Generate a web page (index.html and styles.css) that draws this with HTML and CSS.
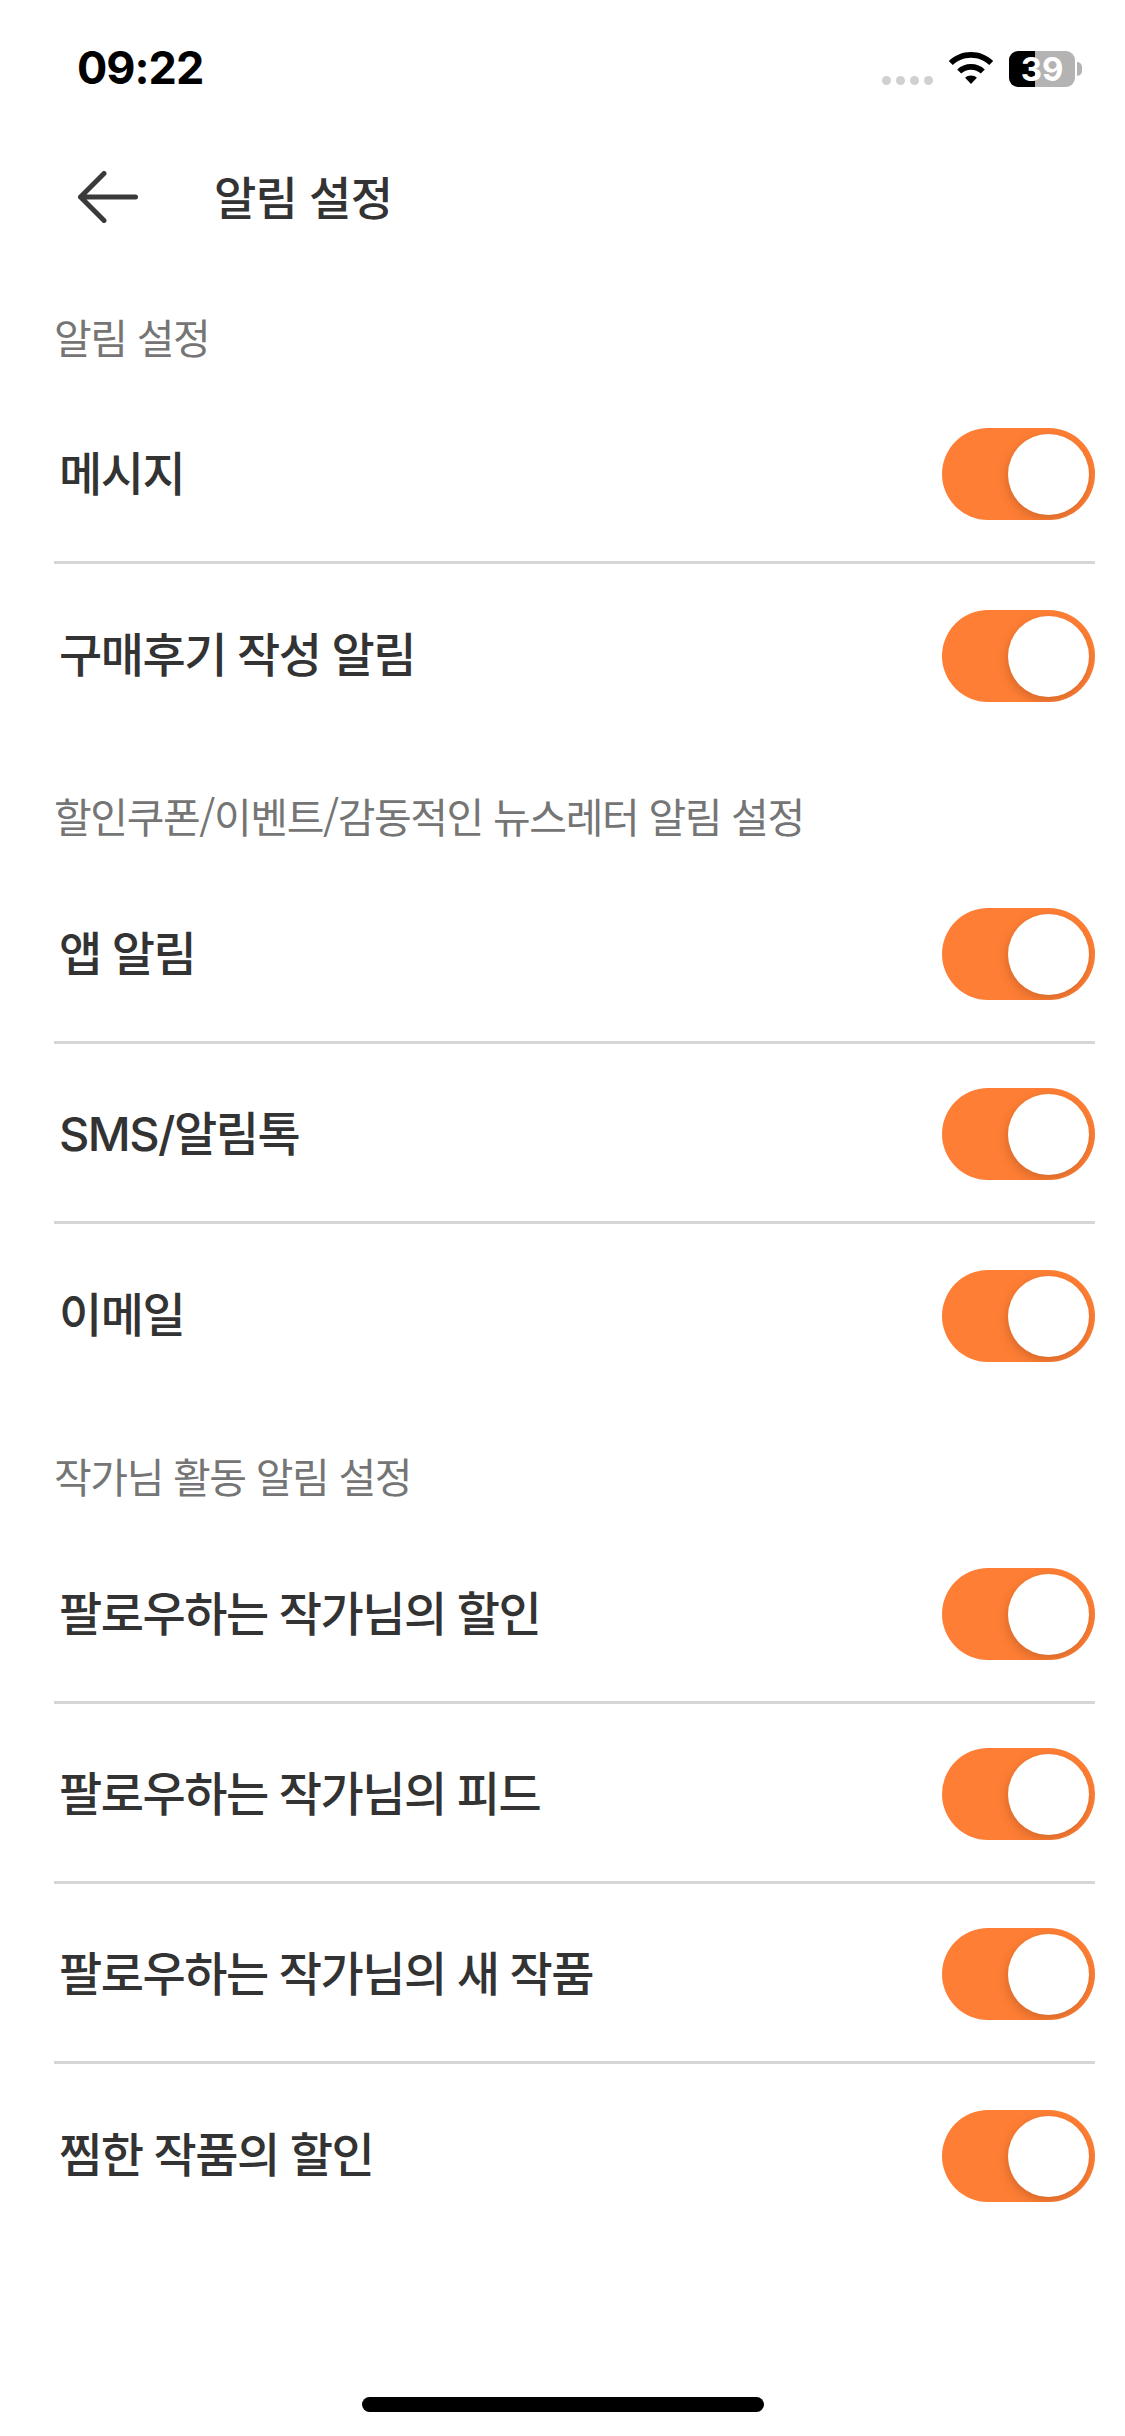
FILE: index.html
```html
<!DOCTYPE html>
<html lang="ko">
<head>
<meta charset="utf-8">
<title>알림 설정</title>
<link rel="stylesheet" href="styles.css">
</head>
<body>
<div class="screen">
  <div class="statusbar">
    <span class="time">09:22</span>
    <div class="status-icons">
      <div class="dots"><i></i><i></i><i></i><i></i></div>
      <svg class="wifi" width="46" height="34" viewBox="0 0 46 34"><path d="M23 0C14.400 0 6.600 3.400 0.800 8.900L4.700 13C9.500 8.500 15.900 5.700 23 5.700S36.500 8.500 41.300 13L45.200 8.900C39.400 3.400 31.600 0 23 0Z M23 12C17.700 12 12.900 14 9.200 17.400L13.200 21.500C15.800 19.100 19.200 17.700 23 17.700S30.200 19.100 32.800 21.500L36.800 17.400C33.100 14 28.300 12 23 12Z M23 23.500C20.700 23.500 18.700 24.300 17.100 25.700L23 32L28.900 25.700C27.300 24.300 25.300 23.500 23 23.500Z" fill="#000"/></svg>
      <div class="battery">
        <div class="battery-body"><span class="battery-text">39</span></div>
        <span class="battery-cap"></span>
      </div>
    </div>
  </div>
  <header class="topbar">
    <svg class="back" width="60" height="52" viewBox="0 0 60 52"><path d="M26 2.500 L2.500 26 L26 49.500 M2.500 26 H57.500" fill="none" stroke="#3a3a3a" stroke-width="5" stroke-linecap="round" stroke-linejoin="round"/></svg>
    <h1 class="title">알림 설정</h1>
  </header>
  <main class="content">
    <section class="group">
      <h2 class="group-title">알림 설정</h2>
      <div class="row"><span class="label">메시지</span><span class="toggle"><i></i></span></div>
      <div class="row"><span class="label">구매후기 작성 알림</span><span class="toggle"><i></i></span></div>
    </section>
    <section class="group">
      <h2 class="group-title">할인쿠폰/이벤트/감동적인 뉴스레터 알림 설정</h2>
      <div class="row"><span class="label">앱 알림</span><span class="toggle"><i></i></span></div>
      <div class="row"><span class="label">SMS/알림톡</span><span class="toggle"><i></i></span></div>
      <div class="row"><span class="label">이메일</span><span class="toggle"><i></i></span></div>
    </section>
    <section class="group">
      <h2 class="group-title">작가님 활동 알림 설정</h2>
      <div class="row"><span class="label">팔로우하는 작가님의 할인</span><span class="toggle"><i></i></span></div>
      <div class="row"><span class="label">팔로우하는 작가님의 피드</span><span class="toggle"><i></i></span></div>
      <div class="row"><span class="label">팔로우하는 작가님의 새 작품</span><span class="toggle"><i></i></span></div>
      <div class="row"><span class="label">찜한 작품의 할인</span><span class="toggle"><i></i></span></div>
    </section>
  </main>
  <div class="home-indicator"></div>
</div>
</body>
</html>
```
FILE: styles.css
```css
* { box-sizing: border-box; margin: 0; padding: 0; }
html, body { background: #fff; }
body { font-family: "Noto Sans CJK KR", "Noto Sans", sans-serif; color: #333; }
.screen { position: relative; width: 1125px; height: 2436px; overflow: hidden; background: #fff; }

.statusbar { height: 136px; padding: 44px 43px 0 77px; display: flex; justify-content: space-between; align-items: flex-start; }
.time { font-family: Inter, "Liberation Sans", sans-serif; font-weight: 700; font-size: 45px; line-height: 48px; color: #000; letter-spacing: -1px; }
.status-icons { display: flex; align-items: flex-start; }
.dots { display: flex; gap: 5px; margin-top: 32px; margin-right: 15px; }
.dots i { width: 9px; height: 9px; border-radius: 50%; background: #d0d0d0; }
.wifi { margin-right: 15px; margin-top: 8px; }
.battery { display: flex; align-items: center; margin-top: 7px; }
.battery-body { width: 66px; height: 36px; border-radius: 9px; background: linear-gradient(to right, #000 26px, #b3b3b3 26px); display: flex; align-items: center; justify-content: center; }
.battery-text { font-family: Inter, "Liberation Sans", sans-serif; font-weight: 700; font-size: 33px; line-height: 36px; color: #fff; }
.battery-cap { width: 5px; height: 14px; margin-left: 2px; background: #b3b3b3; border-radius: 0 7px 7px 0; }

.topbar { height: 122px; padding-left: 78px; display: flex; align-items: center; }
.back { flex: none; }
.title { margin-left: 76px; padding-bottom: 4px; font-size: 46px; font-weight: 500; color: #333; line-height: 60px; letter-spacing: -0.8px; }

.content { padding: 0 30px 0 54px; }
.group-title { height: 88px; font-size: 41px; font-weight: 400; color: #757575; line-height: 78px; letter-spacing: -1.4px; }
.group:first-child .group-title { height: 126px; padding-top: 39px; }
.group { margin-bottom: 32px; }
.row { height: 180px; padding-top: 3px; display: flex; align-items: center; justify-content: space-between; border-bottom: 3px solid #d6d6d6; }
.row:last-child { border-bottom: 0; }
.label { padding-left: 5px; padding-bottom: 8px; font-family: Inter, "Noto Sans CJK KR", sans-serif; font-size: 47px; font-weight: 500; color: #333; letter-spacing: -1.5px; }
.toggle { position: relative; width: 153px; height: 92px; border-radius: 46px; background: #fd7e34; display: block; overflow: hidden; }
.toggle i { position: absolute; right: 6px; top: 6px; width: 81px; height: 81px; border-radius: 50%; background: #fff; box-shadow: -1px 4px 10px rgba(170,80,30,.45); }

.home-indicator { position: absolute; left: 362px; bottom: 24px; width: 402px; height: 15px; border-radius: 8px; background: #000; }
```
